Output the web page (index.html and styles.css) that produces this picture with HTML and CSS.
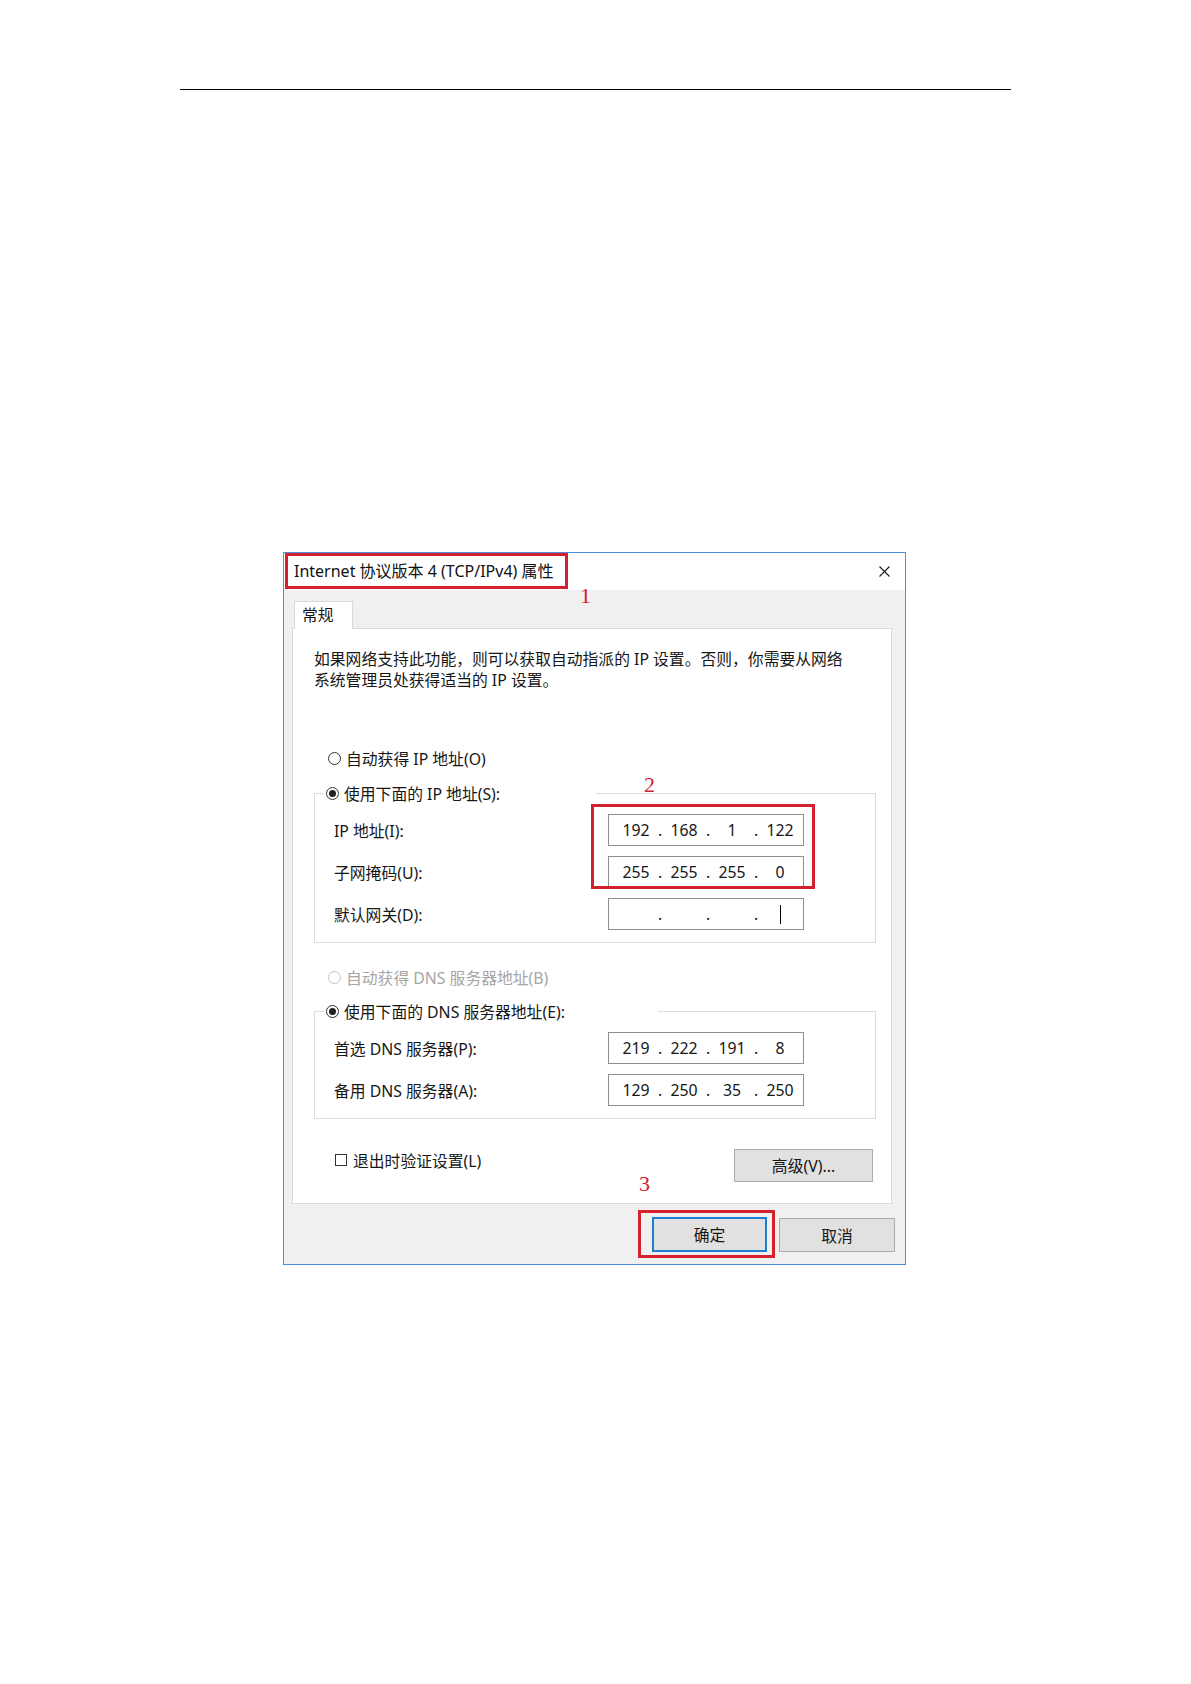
FILE: index.html
```html
<!DOCTYPE html>
<html lang="zh-CN">
<head>
  <meta charset="UTF-8">
  <title>Internet 协议版本 4 (TCP/IPv4) 属性</title>
  <link rel="stylesheet" href="styles.css">
</head>
<body>

  <div class="page">
    <div class="rule"></div>

    <div class="dialog">
      <div class="titlebar">
        <span class="title">Internet 协议版本 4 (TCP/IPv4) 属性</span>
        <svg class="close" width="11" height="11" viewBox="0 0 11 11">
          <path d="M0.5 0.5 L10.5 10.5 M10.5 0.5 L0.5 10.5" stroke="#1a1a1a" stroke-width="1.1" fill="none"/>
        </svg>
      </div>

      <div class="body">
        <div class="tabs"><div class="tab">常规</div></div>

        <div class="panel">
          <p class="desc">如果网络支持此功能，则可以获取自动指派的 IP 设置。否则，你需要从网络<br>系统管理员处获得适当的 IP 设置。</p>

          <div class="option option-top"><span class="radio"></span>自动获得 IP 地址(O)</div>

          <div class="group group-ip">
            <div class="option group-head"><span class="radio checked"></span>使用下面的 IP 地址(S):</div>
            <div class="rows">
              <span class="label">IP 地址(I):</span>
              <div class="ipbox"><span>192</span><i>.</i><span>168</span><i>.</i><span>1</span><i>.</i><span>122</span></div>
              <span class="label">子网掩码(U):</span>
              <div class="ipbox"><span>255</span><i>.</i><span>255</span><i>.</i><span>255</span><i>.</i><span>0</span></div>
              <span class="label">默认网关(D):</span>
              <div class="ipbox"><span></span><i>.</i><span></span><i>.</i><span></span><i>.</i><span><b class="caret"></b></span></div>
            </div>
          </div>

          <div class="option option-mid disabled"><span class="radio"></span>自动获得 DNS 服务器地址(B)</div>

          <div class="group group-dns">
            <div class="option group-head"><span class="radio checked"></span>使用下面的 DNS 服务器地址(E):</div>
            <div class="rows">
              <span class="label">首选 DNS 服务器(P):</span>
              <div class="ipbox"><span>219</span><i>.</i><span>222</span><i>.</i><span>191</span><i>.</i><span>8</span></div>
              <span class="label">备用 DNS 服务器(A):</span>
              <div class="ipbox"><span>129</span><i>.</i><span>250</span><i>.</i><span>35</span><i>.</i><span>250</span></div>
            </div>
          </div>

          <div class="panel-foot">
            <div class="check"><span class="box"></span>退出时验证设置(L)</div>
            <button class="btn btn-adv">高级(V)...</button>
          </div>
        </div>

        <div class="actions">
          <button class="btn btn-ok">确定</button>
          <button class="btn btn-cancel">取消</button>
        </div>
      </div>

      <!-- annotations drawn over the screenshot -->
      <span class="mark mark-1">1</span>
      <span class="mark mark-2">2</span>
      <span class="mark mark-3">3</span>
      <div class="redbox redbox-2"></div>
      <div class="redbox redbox-3"></div>
    </div>
  </div>

</body>
</html>
```

FILE: styles.css
```css
body {
  margin: 0;
  background: #fff;
  font-family: "Noto Sans", "Noto Sans CJK SC", sans-serif;
  font-size: 15.8px;
  color: #161616;
}
.page {
  padding-top: 89px;
}
.rule {
  margin-left: 180px;
  width: 831px;
  height: 1px;
  background: #000;
}

/* dialog window */
.dialog {
  position: relative;
  box-sizing: border-box;
  width: 623px;
  margin: 462px 0 0 283px;
  border: 1px solid #4a8fd8;
  background: #f0f0f0;
}
.titlebar {
  height: 37px;
  background: #fff;
  display: flex;
  justify-content: space-between;
  align-items: center;
  padding-right: 15px;
}
.title {
  align-self: flex-start;
  box-sizing: border-box;
  width: 283px;
  height: 36px;
  margin-left: 1px;
  padding-left: 6px;
  border: 3px solid #d3222d;
  font-size: 16px;
  line-height: 30px;
  color: #111;
  white-space: nowrap;
}
.close {
  display: block;
}

.body {
  padding: 11px 13px 12px 8px;
}
.tabs {
  display: flex;
  padding-left: 2px;
}
.tab {
  position: relative;
  z-index: 1;
  box-sizing: border-box;
  width: 59px;
  height: 28px;
  margin-bottom: -1px;
  padding-left: 7px;
  background: #fff;
  border: 1px solid #d9d9d9;
  border-bottom: none;
  line-height: 26px;
}
.panel {
  box-sizing: border-box;
  height: 576px;
  padding: 20px 15px 21px 21px;
  background: #fff;
  border: 1px solid #d9d9d9;
}
.desc {
  margin: 0;
  line-height: 21px;
}

/* radio rows */
.option {
  display: flex;
  align-items: center;
  height: 22px;
  white-space: nowrap;
}
.option-top {
  margin-top: 56px;
  padding-left: 14px;
}
.option-mid {
  margin-top: 23px;
  padding-left: 14px;
}
.disabled {
  color: #a6a6a6;
}
.radio {
  box-sizing: border-box;
  width: 13px;
  height: 13px;
  margin-right: 5px;
  border: 1px solid #333;
  border-radius: 50%;
  display: flex;
  align-items: center;
  justify-content: center;
  flex: none;
}
.disabled .radio {
  border-color: #c6c6c6;
}
.radio.checked::after {
  content: "";
  width: 7px;
  height: 7px;
  border-radius: 50%;
  background: #222;
}

/* group boxes */
.group {
  margin: 24px 0 0 0;
  padding: 0 0 12px 19px;
  border: 1px solid #dcdcdc;
}
.group-dns {
  margin-top: 23px;
}
.group-head {
  margin: -12px 0 0 -10px;
  padding-left: 2px;
  background: #fff;
}
.group-ip .group-head {
  width: 270px;
}
.group-dns .group-head {
  width: 332px;
}
.rows {
  margin-top: 10px;
  display: grid;
  grid-template-columns: 274px 196px;
  row-gap: 10px;
  align-items: center;
}
.ipbox {
  box-sizing: border-box;
  height: 32px;
  padding-left: 7px;
  border: 1px solid #8f8f8f;
  display: flex;
  line-height: 30px;
}
.ipbox span {
  width: 40px;
  text-align: center;
}
.ipbox i {
  width: 8px;
  text-align: center;
  font-style: normal;
}
.caret {
  display: inline-block;
  width: 1px;
  height: 19px;
  background: #000;
  vertical-align: -4px;
}

/* bottom of panel */
.panel-foot {
  margin-top: 30px;
  display: flex;
  justify-content: space-between;
  align-items: flex-start;
}
.check {
  display: flex;
  align-items: center;
  height: 22px;
  padding-left: 21px;
}
.box {
  box-sizing: border-box;
  width: 12px;
  height: 12px;
  margin-right: 6px;
  border: 1px solid #333;
}

/* buttons */
.btn {
  box-sizing: border-box;
  font-family: inherit;
  font-size: 15.8px;
  color: #161616;
  background: #e1e1e1;
  border: 1px solid #adadad;
  padding: 0;
}
.btn-adv {
  width: 139px;
  height: 33px;
  margin-right: 3px;
}
.actions {
  margin: 13px -3px 0 0;
  display: flex;
  justify-content: flex-end;
  gap: 12px;
}
.btn-ok {
  width: 115px;
  height: 35px;
  border: 2px solid #1a7fd4;
}
.btn-cancel {
  width: 116px;
  height: 34px;
  margin-top: 1px;
}

/* red annotation marks */
.mark {
  position: absolute;
  font-family: "Liberation Serif", serif;
  font-size: 22px;
  line-height: 1;
  color: #d0232e;
}
.mark-1 {
  left: 296px;
  top: 32px;
}
.mark-2 {
  left: 360px;
  top: 221px;
}
.mark-3 {
  left: 355px;
  top: 620px;
}
.redbox {
  position: absolute;
  box-sizing: border-box;
  border: 3px solid #d3222d;
}
.redbox-2 {
  left: 307px;
  top: 251px;
  width: 224px;
  height: 85px;
}
.redbox-3 {
  left: 354px;
  top: 657px;
  width: 137px;
  height: 48px;
}
```
